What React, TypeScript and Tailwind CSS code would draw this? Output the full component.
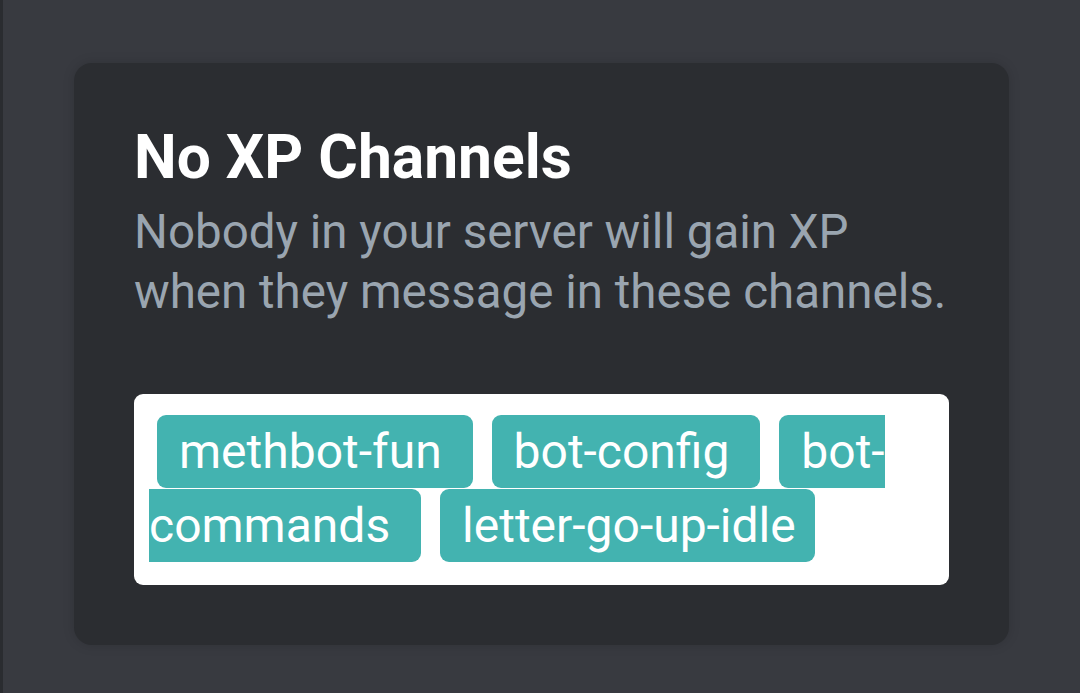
import React from "react";

const channels = ["methbot-fun", "bot-config", "bot-commands", "letter-go-up-idle"];

export default function App() {
  return (
    <div
      className="w-[1080px] h-[693px] bg-[#383a40] border-l-[3px] border-[#2a2c30] pt-[63px] pl-[71px] overflow-hidden"
      style={{ fontFamily: "Roboto, 'Noto Sans', sans-serif" }}
    >
      <div className="w-[935px] h-[582px] bg-[#2b2d31] rounded-[18px] shadow-[0_0_12px_rgba(0,0,0,0.15)] px-[60px] pt-[59px]">
        <h1 className="text-[60.5px] leading-[71px] font-bold text-white">No XP Channels</h1>
        <p className="mt-[9px] text-[47.5px] leading-[60px] text-[#9aa5b0]">
          Nobody in your server will gain XP when they message in these channels.
        </p>
        <div className="mt-[72px] bg-white rounded-[9px] pl-[15px] pr-[15px] pt-[21px] pb-[22px] text-[48px] leading-[74px] text-white">
          {channels.map((c) => (
            <span key={c} className="bg-[#43b3b0] rounded-[9px] ml-[8px] mr-[11px] pl-[22px] pr-[19px] py-[8px]">
              {c}{" "}
            </span>
          ))}
        </div>
      </div>
    </div>
  );
}
